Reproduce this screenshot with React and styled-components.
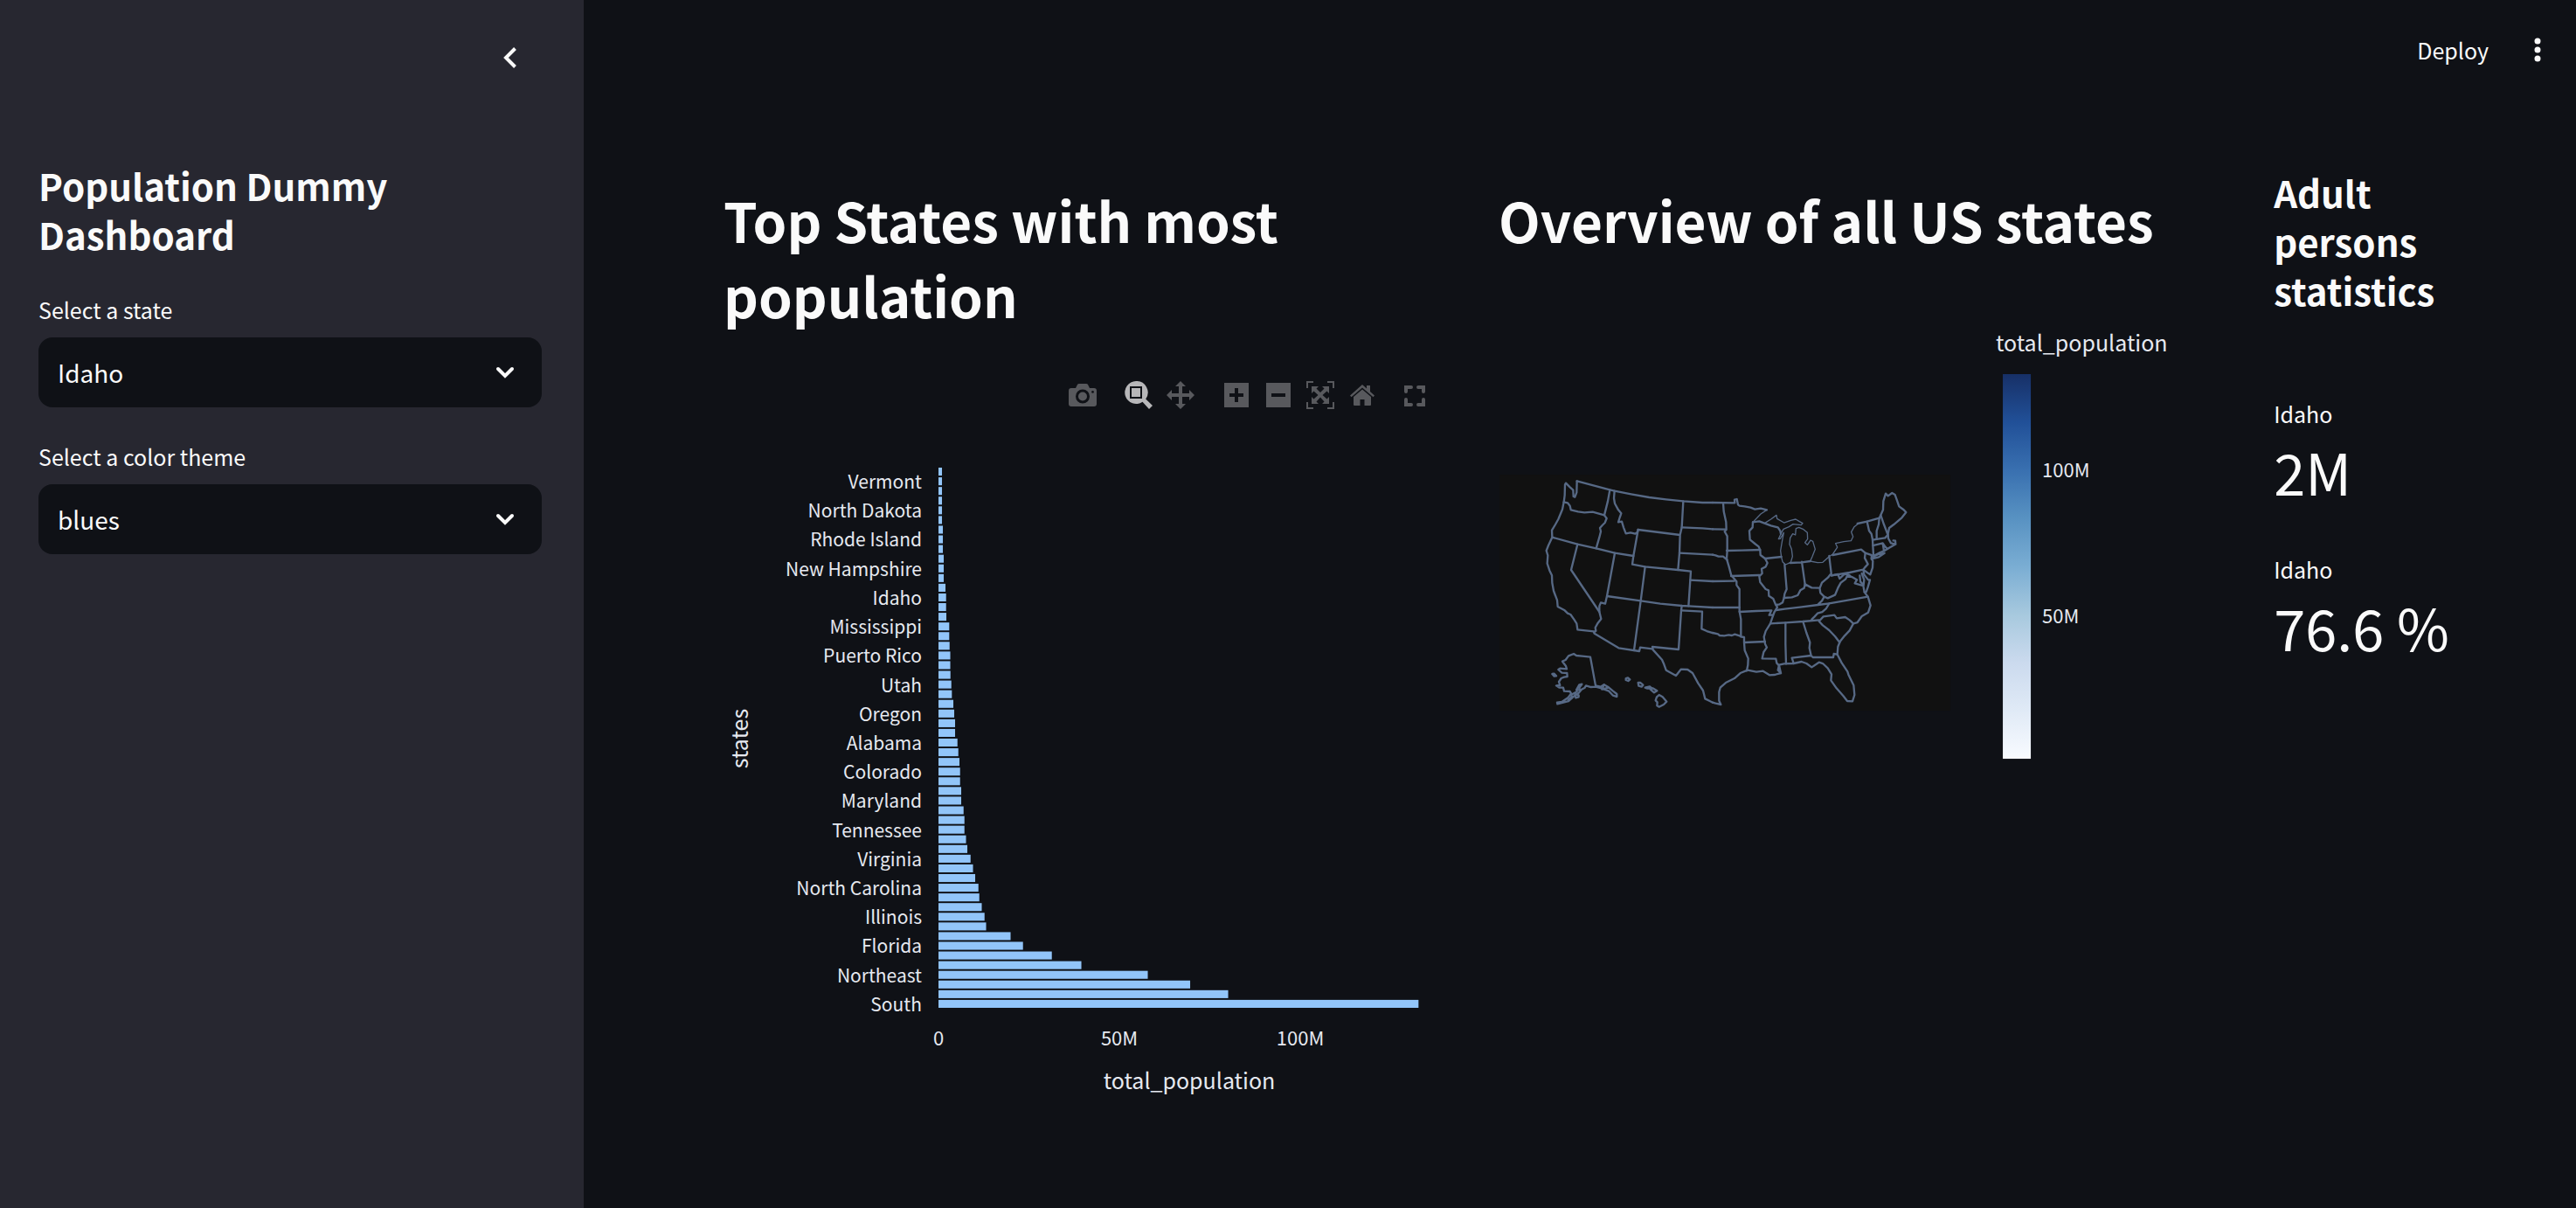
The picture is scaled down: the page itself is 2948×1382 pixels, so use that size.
import React from "react";
import styled, { createGlobalStyle } from "styled-components";

const GlobalStyle = createGlobalStyle`
  *, *::before, *::after { box-sizing: border-box; }
  body {
    margin: 0;
    background: #0f1116;
    color: #fafafa;
    font-family: "Noto Sans CJK JP", "Noto Sans CJK SC", "Noto Sans", sans-serif;
    font-size: 25px;
    line-height: 40px;
  }
  button, select { font: inherit; color: inherit; }
`;

const Shell = styled.div`
  display: grid;
  grid-template-columns: 668px minmax(0, 1fr);
  min-height: 100vh;
`;

const Sidebar = styled.aside`
  background: #272730;
  padding: 0 48px 48px 44px;
`;

const SidebarTop = styled.div`
  display: flex;
  justify-content: flex-end;
  align-items: center;
  height: 132px;
  margin-bottom: 52px;
  padding-right: 12px;
`;

const IconButton = styled.button`
  display: flex;
  align-items: center;
  justify-content: center;
  width: 48px;
  height: 48px;
  padding: 0;
  border: 0;
  background: transparent;
  cursor: pointer;
`;

const SubTitle = styled.h2`
  margin: 0;
  font-size: 42px;
  line-height: 56px;
  font-weight: 700;
`;

const Form = styled.form`
  display: flex;
  flex-direction: column;
  gap: 36px;
  margin-top: 38px;
`;

const Field = styled.div`
  display: flex;
  flex-direction: column;
  gap: 12px;
`;

const SelectBox = styled.div`
  display: grid;
  align-items: center;

  > * { grid-area: 1 / 1; }

  > svg {
    justify-self: end;
    margin-right: 30px;
    pointer-events: none;
  }
`;

const Select = styled.select`
  appearance: none;
  width: 100%;
  height: 80px;
  padding: 0 64px 0 22px;
  border: 0;
  border-radius: 16px;
  background: #0f1116;
  font-size: 28px;
`;

const Page = styled.div`
  min-width: 0;
`;

const Header = styled.header`
  display: flex;
  justify-content: flex-end;
  align-items: center;
  gap: 32px;
  height: 114px;
  padding: 0 20px;
`;

const DeployButton = styled.button`
  padding: 0;
  border: 0;
  background: transparent;
  cursor: pointer;
`;

const Columns = styled.main`
  display: grid;
  grid-template-columns: minmax(0, 31fr) minmax(0, 31fr) minmax(0, 7fr);
  gap: 64px;
  padding: 62px 160px 80px;
`;

const Column = styled.section`
  min-width: 0;
`;

const Title = styled.h1`
  margin: 0;
  padding: 32px 0;
  font-size: 62px;
  line-height: 86px;
  font-weight: 700;
`;

const Toolbar = styled.div`
  display: flex;
  justify-content: flex-end;
  gap: 16px;
  padding: 24px 12px 0 0;
`;

const ToolGroup = styled.div`
  display: flex;
`;

const ToolButton = styled.button`
  display: flex;
  align-items: center;
  justify-content: center;
  width: ${(p) => (p.$narrow ? 40 : 48)}px;
  height: 32px;
  padding: 0;
  border: 0;
  background: transparent;
  color: ${(p) => (p.$active ? "#b7b7b9" : "#58595d")};
  cursor: pointer;
`;

const Figure = styled.svg`
  display: block;
  width: 100%;
  height: auto;
`;

const textSizes = { label: 21, tick: 22, title: 25 };

const ChartText = styled.text`
  fill: #e6e9f0;
  font-size: ${(p) => textSizes[p.$size || "tick"]}px;
`;

const Stats = styled.div`
  padding-top: 16px;
`;

const Metrics = styled.dl`
  display: flex;
  flex-direction: column;
  gap: 46px;
  margin: 93px 0 0;
`;

const Metric = styled.div`
  dt, dd { margin: 0; white-space: nowrap; }
  dd { font-size: 65px; line-height: 92px; }
`;

const ChevronDown = () => (
  <svg width="24" height="24" viewBox="0 0 24 24" fill="none" stroke="#fafafa" strokeWidth="4" strokeLinecap="round" strokeLinejoin="miter" aria-hidden="true">
    <path d="M4 8l8 8 8-8" />
  </svg>
);

/* Chart tool icons, each on a 32 x 32 grid */
const icons = {
  camera: (
    <>
      <path fillRule="evenodd" d="M3 8h5l2-4q.5-1 2-1h8q1.500 0 2 1l2 4h5q3 0 3 3v15q0 3-3 3H3q-3 0-3-3V11q0-3 3-3zM16 9.500a8 8 0 1 0 0 16 8 8 0 0 0 0-16zM27.500 11a1.400 1.400 0 1 0 0 2.800 1.400 1.400 0 0 0 0-2.800z" />
      <circle cx="16" cy="17.500" r="5" />
    </>
  ),
  zoom: (
    <>
      <path fillRule="evenodd" d="M13 0a13 13 0 1 0 7.500 23.800L28 32l4-4-7.800-7.500A13 13 0 0 0 13 0zM6 6h14v14H6z" />
      <path d="M8 8h10v10H8z" />
    </>
  ),
  pan: <path d="M16 0l6 6h-4v8h8v-4l6 6-6 6v-4h-8v8h4l-6 6-6-6h4v-8H6v4l-6-6 6-6v4h8V6h-4z" />,
  plus: <path fillRule="evenodd" d="M2 2h28v28H2zM14 8v6H8v4h6v6h4v-6h6v-4h-6V8z" />,
  minus: <path fillRule="evenodd" d="M2 2h28v28H2zM8 14v4h16v-4z" />,
  autoscale: (
    <>
      <path d="M0 0h8v2H2v6H0zM24 0h8v8h-2V2h-6zM0 24h2v6h6v2H0zM30 24h2v8h-8v-2h6z" />
      <path d="M6 6h8l-2.500 2.500L16 13l4.500-4.500L18 6h8v8l-2.500-2.500L18.500 16l5 4.500L26 18v8h-8l2.500-2.500L16 18.500l-4.500 5L14 26H6v-8l2.500 2.500 5-4.500-5-4.500L6 14z" />
    </>
  ),
  home: (
    <>
      <path d="M16 4l5 4.500V5h4v7l5 4.500-1.500 1.800L16 7.500 3.500 18.300 2 16.500z" />
      <path d="M16 9.500l10 8.500v9q0 1-1 1h-6.500v-7h-5v7H7q-1 0-1-1v-9z" />
    </>
  ),
  fullscreen: (
    <path d="M6 12V7h6M20 7h6v5M26 21v6h-6M12 27H6v-6" fill="none" stroke="currentColor" strokeWidth="4" strokeLinecap="round" />
  ),
};

const toolGroups = [
  [["camera", "Download plot as a png"]],
  [["zoom", "Zoom"], ["pan", "Pan"]],
  [["plus", "Zoom in"], ["minus", "Zoom out"], ["autoscale", "Autoscale"], ["home", "Reset axes"]],
  [["fullscreen", "Fullscreen"]],
];

/* Bar lengths on a scale where 207 units stand for 50M people */
const bars = [
  4, 4, 4, 4, 4, 4, 5, 5, 5, 6, 6, 6, 8, 8.700, 8.700, 9, 12.300, 12.300, 12.700, 13.500, 13.500, 13.700, 14.700, 15.300,
  17, 18, 19, 19, 21.700, 22.700, 24, 24.700, 24.700, 26, 26, 28.700, 29.700, 29.700, 31.500, 33, 36.700, 39.500, 42,
  45.700, 46.700, 49.500, 52.700, 54.500, 82.500, 96.700, 129.700, 163.500, 239.500, 288, 331.500, 549.300,
];

const stateLabels = [
  "Vermont", "North Dakota", "Rhode Island", "New Hampshire", "Idaho", "Mississippi", "Puerto Rico", "Utah", "Oregon",
  "Alabama", "Colorado", "Maryland", "Tennessee", "Virginia", "North Carolina", "Illinois", "Florida", "Northeast", "South",
];

const BAR_STEP = 11.07;
const BAR_X = 246;
const BAR_Y = 67;

const BarChart = () => (
  <Figure viewBox="0 0 823 820" role="img" aria-label="Total population by state">
    {bars.map((w, i) => (
      <rect key={i} x={BAR_X} y={BAR_Y + i * BAR_STEP} width={w} height="9.100" fill="#92c5f9" />
    ))}
    {stateLabels.map((name, i) => (
      <ChartText key={name} $size="label" x="227" y={BAR_Y + 13 + (i * 3 + 1) * BAR_STEP} textAnchor="end">{name}</ChartText>
    ))}
    {["0", "50M", "100M"].map((tick, i) => (
      <ChartText key={tick} x={BAR_X + i * 207} y="728" textAnchor="middle">{tick}</ChartText>
    ))}
    <ChartText $size="title" x="533" y="778" textAnchor="middle">total_population</ChartText>
    <ChartText $size="title" transform="translate(28 377) rotate(-90)" textAnchor="middle">states</ChartText>
  </Figure>
);

/* Map outlines, drawn three times enlarged; the eastern half starts at x = 780 */
const westBorders = [
  "M314,91L313,130L307,146L302,144L301,122L290,112L276,98L273,103L272,140L269,163L264,188L250,222L240,240L228,260L229,284L216,312L209,330L214,346L212,374L220,398L228,415L229,440L234,468L246,500L248,522L272,535L282,545L292,549L304,566L313,580L316,601L372,607L374,614L457,664L528,675L531,662L573,667",
  "M314,91L427,121L443,125L500,136L562,147L620,154L679,160L745,165L780,165",
  "M427,121L420,160L408,208L416,219L410,234L401,243L393,252L396,264L391,284L380,322",
  "M269,163L282,166L290,176L293,190L318,196L340,199L368,197L408,208",
  "M229,284L316,308L380,322L444,338L508,348",
  "M443,125L441,150L444,168L456,190L466,202L461,216L456,232L468,230L474,250L482,271L498,268L514,272L521,267L524,258",
  "M524,258L508,348L504,377L548,385L661,396L705,401L703,431L697,520",
  "M524,258L668,276M679,160L674,250L668,276L666,338L661,396",
  "M674,250L745,253L780,256M666,338L780,344M703,431L780,435",
  "M548,385L533,502L510,672",
  "M316,308L294,396L391,540L397,564L386,578L377,594L379,605L372,610",
  "M444,338L417,486L411,512L396,508L391,520L391,540",
  "M417,486L533,502L600,512L674,519L697,520L780,525",
  "M674,519L672,535L663,669L573,660L575,670L606,704L613,720L620,740L654,759L671,737L694,738L711,750L730,785L747,810L754,838L770,846L780,851",
  "M672,535L744,539L742,598L760,606L780,612",
  "M303,684L312,690L332,692L360,695L378,793L395,797L407,790L420,797L438,812L451,822L451,831L438,827L424,812L398,802L378,797L362,798L345,793L340,801L330,806L320,818L305,828L285,846L247,856L246,851L262,849L283,835L294,820L290,813L270,812L267,800L254,800L243,793L256,792L252,780L260,768L270,764L281,762L280,750L262,749L250,738L256,734L279,736L276,726L264,710L275,705L285,691Z",
  "M229,753L236,752L243,760L236,761ZM308,822L320,826L320,832L310,835ZM312,808L322,790L331,788L322,800L324,808ZM284,842L298,830M292,826L314,814M407,790L400,806L422,800",
  "M482,768L489,766L496,772L490,777L482,774ZM524,783L532,783L541,791L536,797L526,794ZM548,800L564,796L571,802L556,803ZM566,806L574,802L589,811L579,817Z",
  "M596,825L608,832L622,848L612,858L596,866L589,862L590,850L584,844L588,832Z",
];

const eastBorders = [
  "M0,165L76,166L75,155L83,153L87,172L92,176L110,178L130,182L145,188L165,185L186,190",
  "M36,166L38,195L46,232L47,258L41,264L50,280L50,330L48,358L56,385L64,415L82,436L82,448L92,462L92,525L92,538L97,565L97,625",
  "M0,256L44,257M0,344L10,346L20,350L36,350L50,362M0,435L74,434M0,525L92,525M0,612L18,616L24,621L40,622L55,619L66,621L76,617L90,621L97,625L108,627L108,645L180,642",
  "M138,232L137,250L126,262L128,292L145,306L158,316L163,328L164,345L180,357L188,372L182,385L168,392L170,408L160,418L163,438L182,462L192,466L193,485L208,495L216,515L222,524L212,540L204,562L198,580L182,606L176,626L180,650L186,662L175,678L170,700L217,701L220,716L228,724L234,750",
  "M138,232L160,229L178,236L200,244L224,250L232,262L234,272",
  "M48,330L100,329L163,327M63,417L160,414M180,357L236,351",
  "M92,540L150,537L202,535L194,551L206,551",
  "M108,645L110,672L122,700L121,722L117,742",
  "M0,851L10,854L28,858L22,845L22,815L26,800L45,783L75,768L95,750L120,740L150,746L173,743L195,757L212,756L234,750L224,740L228,722L245,718L278,717L305,711L322,717L340,730L365,713L378,717L395,733L408,754L406,775L425,802L448,828L462,846L480,847L487,825L484,792L466,755L463,745L443,715L428,686L430,660L437,642L453,622L470,604L483,580L497,576L512,555L534,542L542,518L533,488L521,472",
  "M247,378L254,462L247,478L245,492L240,508L230,514L218,516",
  "M245,492L272,490L292,483L301,466L314,458L317,445L340,457L368,458L375,440L396,422L404,412",
  "M306,368L317,445M266,372L306,370L335,366M400,348L408,415",
  "M408,415L470,405L517,395M412,345L510,326L524,338L522,355L533,376L522,388L517,395",
  "M524,338L546,345L545,358L550,365L549,388L541,412L532,406L517,395L520,412L534,430L540,430L533,455L527,472L521,472L517,450L488,442L495,430",
  "M505,415L507,436L518,448L520,430L512,408",
  "M368,462L370,475L383,488L395,493L420,482L430,458L440,440L456,428L462,416L478,420L495,430",
  "M408,415L430,411L436,426L450,412L462,410L472,416",
  "M383,488L375,502L362,514M218,534L248,530L300,524L362,516L400,511L533,488M198,580L250,577L310,573L365,568",
  "M400,511L390,528L376,540L360,545L350,556L340,566",
  "M365,572L380,556L418,551L426,562L455,558L470,568L483,580M365,572L378,586L400,603L420,624L436,645",
  "M250,577L250,650L252,718M310,573L322,612L334,645L332,664L338,690M278,717L272,698L338,690L344,696L414,696L416,684L428,686",
  "M497,237L530,230L572,218L577,208L585,190L586,160L594,134L602,142L616,132L626,138L632,155L640,178L654,188L664,198L650,216L622,240L606,252L602,272L603,288L612,304L628,308L627,296L620,295M627,308L606,320L590,330L575,336L552,348",
  "M530,230L537,262L545,272L549,292L552,348M572,218L570,240L563,262L563,290M577,208L588,240L601,274",
  "M549,293L592,286L601,276M550,312L584,304L592,316L600,324M584,306L588,330M546,358L570,352L590,338L566,343L548,352",
];

const lakeShores = [
  "M186,190L165,204L138,232M178,236L200,222L219,208L221,220L245,234L268,226L285,222L298,230L309,236L304,242L276,239L262,248L243,256L234,272L226,290L232,289L244,268L238,300L233,330L236,352L240,368L250,378L268,370L274,350L271,325L264,308L266,286L275,272L284,276L286,254L296,250L312,257L325,268L326,290L317,302L325,310L336,294L344,298L352,325L342,350L335,366L360,371L378,370L400,350L412,342L428,318L422,305L450,299L475,296L482,282L476,266L486,248L500,237",
];

const MapFigure = () => (
  <Figure viewBox="-1 1 823 560" role="img" aria-label="Map of total population of all US states">
    <defs>
      <linearGradient id="blues" x1="0" y1="0" x2="0" y2="1">
        {["#173067", "#215098", "#3970b0", "#5892c2", "#7aadd3", "#a7c9de", "#cbdaee", "#e0eaf6", "#f8fbff"].map((c, i) => (
          <stop key={c} offset={i / 8} stopColor={c} />
        ))}
      </linearGradient>
    </defs>
    <rect x="0" y="218" width="516" height="270" fill="#111111" />
    <g transform="translate(-16 195) scale(0.3333)" fill="none" stroke="#576985" strokeWidth="7" strokeLinejoin="round" strokeLinecap="round">
      {westBorders.map((d) => <path key={d} d={d} />)}
      <g transform="translate(780 0)">
        {eastBorders.map((d) => <path key={d} d={d} />)}
        {lakeShores.map((d) => <path key={d} d={d} strokeWidth="4" />)}
      </g>
    </g>
    <ChartText $size="title" x="568" y="77">total_population</ChartText>
    <rect x="576" y="103" width="32" height="440" fill="url(#blues)" />
    <ChartText x="621" y="221">100M</ChartText>
    <ChartText x="621" y="388">50M</ChartText>
  </Figure>
);

const SelectField = ({ id, label, options }) => (
  <Field>
    <label htmlFor={id}>{label}</label>
    <SelectBox>
      <Select id={id} defaultValue={options[0]}>
        {options.map((o) => <option key={o}>{o}</option>)}
      </Select>
      <ChevronDown />
    </SelectBox>
  </Field>
);

export default function App() {
  return (
    <Shell>
      <GlobalStyle />
      <Sidebar>
        <SidebarTop>
          <IconButton type="button" aria-label="Collapse sidebar">
            <svg width="32" height="32" viewBox="0 0 32 32" fill="none" stroke="#fafafa" strokeWidth="4" aria-hidden="true">
              <path d="M21.500 5.500L11 16l10.500 10.500" />
            </svg>
          </IconButton>
        </SidebarTop>
        <SubTitle>Population Dummy Dashboard</SubTitle>
        <Form>
          <SelectField id="state" label="Select a state" options={["Idaho"]} />
          <SelectField id="theme" label="Select a color theme" options={["blues"]} />
        </Form>
      </Sidebar>
      <Page>
        <Header>
          <DeployButton type="button">Deploy</DeployButton>
          <IconButton type="button" aria-label="Main menu">
            <svg width="32" height="32" viewBox="0 0 32 32" fill="#fafafa" aria-hidden="true">
              <circle cx="16" cy="6" r="3.500" />
              <circle cx="16" cy="16" r="3.500" />
              <circle cx="16" cy="26" r="3.500" />
            </svg>
          </IconButton>
        </Header>
        <Columns>
          <Column>
            <Title>Top States with most population</Title>
            <Toolbar>
              {toolGroups.map((group) => (
                <ToolGroup key={group[0][0]}>
                  {group.map(([icon, label]) => (
                    <ToolButton
                      key={icon}
                      type="button"
                      aria-label={label}
                      $active={icon === "zoom"}
                      $narrow={icon === "fullscreen"}
                    >
                      <svg width="32" height="32" viewBox="0 0 32 32" fill="currentColor" aria-hidden="true">{icons[icon]}</svg>
                    </ToolButton>
                  ))}
                </ToolGroup>
              ))}
            </Toolbar>
            <BarChart />
          </Column>
          <Column>
            <Title>Overview of all US states</Title>
            <MapFigure />
          </Column>
          <Column>
            <Stats>
              <SubTitle>Adult persons statistics</SubTitle>
              <Metrics>
                <Metric><dt>Idaho</dt><dd>2M</dd></Metric>
                <Metric><dt>Idaho</dt><dd>76.6 %</dd></Metric>
              </Metrics>
            </Stats>
          </Column>
        </Columns>
      </Page>
    </Shell>
  );
}
